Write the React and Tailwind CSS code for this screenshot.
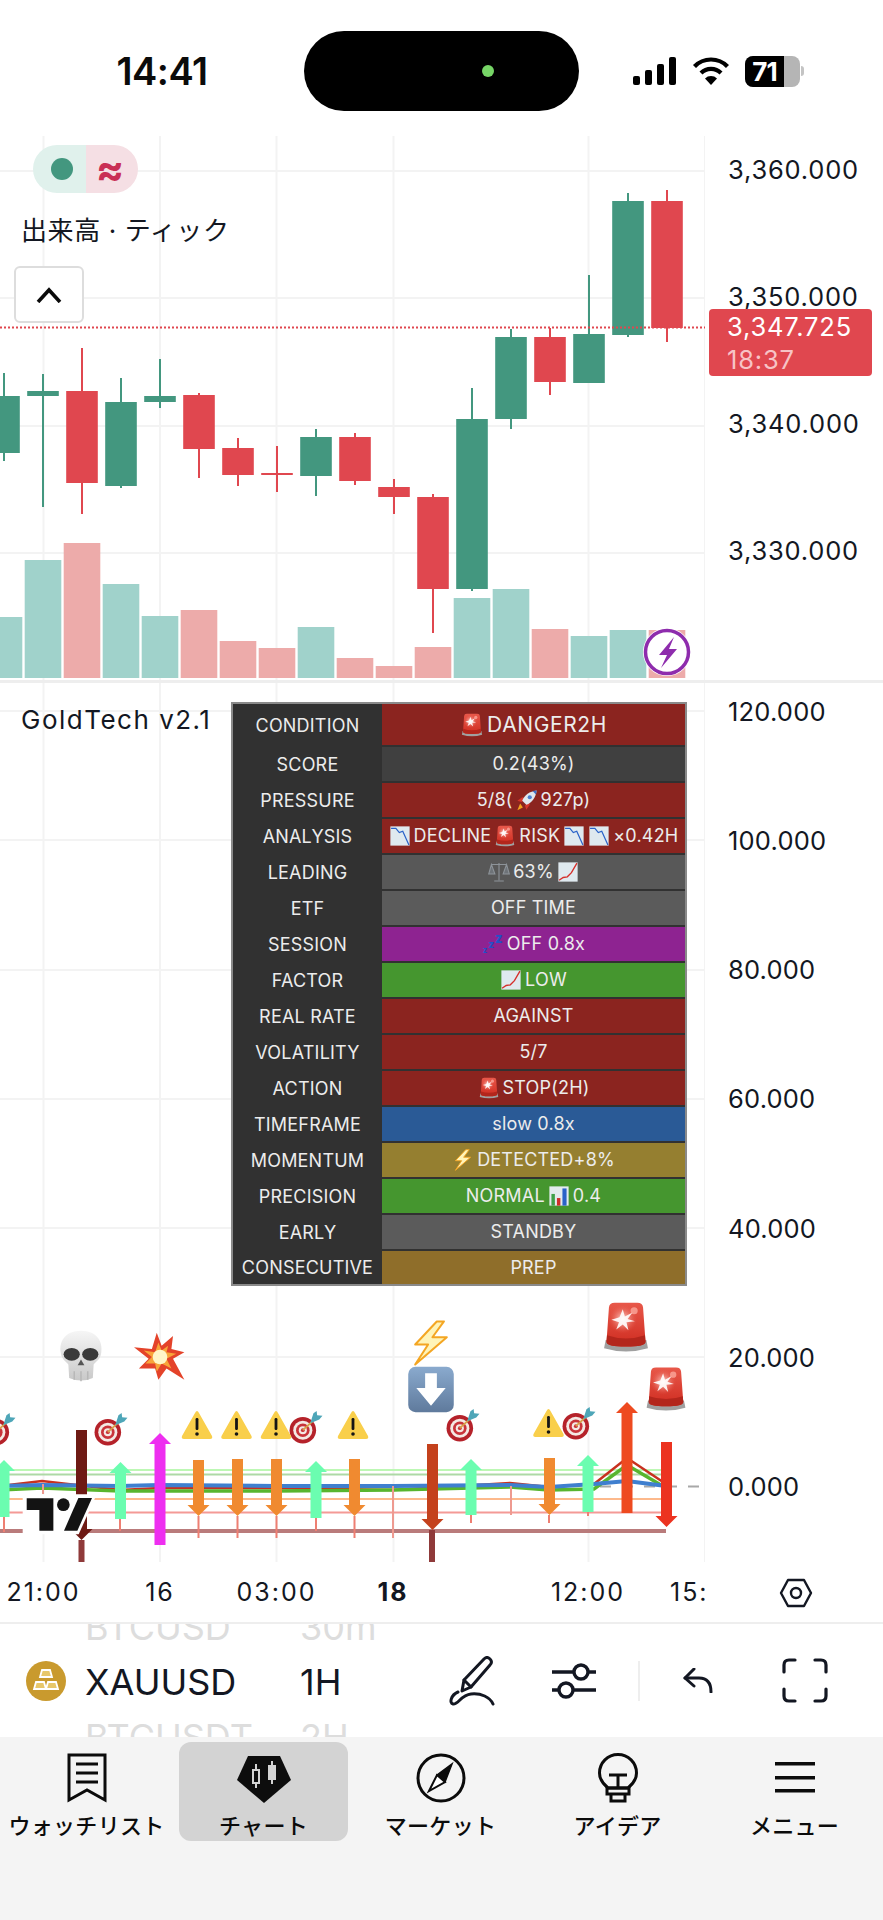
import React from "react";

const GREEN = "#43977f";
const RED = "#e0474f";

// x = 4 + 39 * i for every candle
const candles = [
  ["g", 373, 461, 396, 453],
  ["g", 374, 507, 391, 396],
  ["r", 348, 514, 391, 483],
  ["g", 378, 488, 402, 486],
  ["g", 359, 408, 396, 402],
  ["r", 393, 478, 395, 449],
  ["r", 438, 486, 448, 475],
  ["r", 446, 492, 473, 475],
  ["g", 429, 496, 437, 476],
  ["r", 433, 485, 437, 481],
  ["r", 479, 514, 487, 497],
  ["r", 494, 633, 497, 589],
  ["g", 388, 591, 419, 589],
  ["g", 329, 429, 337, 419],
  ["r", 328, 395, 337, 382],
  ["g", 275, 383, 334, 383],
  ["g", 193, 337, 201, 335],
  ["r", 190, 342, 201, 328],
];

const volumes = [617, 560, 543, 584, 616, 610, 641, 648, 627, 658, 666, 647, 598, 589, 629, 636, 630, 630];

const gridX = [43.5, 160, 276.5, 393.5, 588.5, 705];

function Emoji({ name, x, y, size = 32, className }) {
  return (
    <svg x={x} y={y} width={size} height={size} viewBox="0 0 32 32" className={className}>
      {name === "siren" && (
        <g>
          <path d="M3.500 24 H28.500 L29.500 29 Q16 33 2.500 29 Z" fill="#a0a0a0" />
          <path d="M5.500 4 Q5.700 1 9 1 H23 Q26.300 1 26.500 4 L28 25 Q28 28 16 28 Q4 28 4 25 Z" fill="url(#sirenRed)" />
          <path d="M4.300 21 Q16 25 27.700 21 L28 25 Q28 28 16 28 Q4 28 4 25 Z" fill="#b3261c" />
          <circle cx="14" cy="11" r="9" fill="url(#sirenGlow)" />
          <path d="M14 5 L15.300 9.500 L20 7 L17 11 L21.500 12.500 L16.300 13 L17.500 18 L14 14.500 L10 17.500 L11.700 13 L7 11.500 L12 10 Z" fill="#ffffff" opacity="0.9" />
          <circle cx="21" cy="6" r="2.200" fill="#ffb4a8" opacity="0.7" />
        </g>
      )}
      {name === "target" && (
        <g>
          <circle cx="13" cy="19" r="12.500" fill="#b5222a" />
          <circle cx="13" cy="19" r="9" fill="#f4e9e4" />
          <circle cx="13" cy="19" r="6.400" fill="#c9333a" />
          <circle cx="13" cy="19" r="3.800" fill="#f4e9e4" />
          <circle cx="13" cy="19" r="1.800" fill="#c9333a" />
          <path d="M13 19 L25 8" stroke="#d8a24a" strokeWidth="1.600" />
          <path d="M20 12.500 L23 3 L26 1 L26.500 5 L31.500 5.500 L28.500 9 Z" fill="#4ea6b8" />
        </g>
      )}
      {name === "warning" && (
        <g>
          <path d="M16 2 Q17 2 18 4 L31 27 Q32 30 29 30 H3 Q0 30 1 27 L14 4 Q15 2 16 2 Z" fill="#f9cf4b" />
          <rect x="14.600" y="9" width="2.800" height="12" rx="1.200" fill="#151515" />
          <circle cx="16" cy="25" r="1.800" fill="#151515" />
        </g>
      )}
      {name === "skull" && (
        <g>
          <path d="M16 1 C26 1 29 8 28 14 C27.500 18 25 19 23.500 21 L23 29 Q16 32 9 29 L8.500 21 C7 19 4.500 18 4 14 C3 8 6 1 16 1 Z" fill="url(#skullFill)" />
          <ellipse cx="10.500" cy="15" rx="4.800" ry="3.800" fill="#3a3a3a" />
          <ellipse cx="21.500" cy="15" rx="4.800" ry="3.800" fill="#3a3a3a" />
          <path d="M16 18 L18 21.500 H14 Z" fill="#555" />
          <path d="M12 25 V30 M16 25 V31 M20 25 V30" stroke="#b8b8b8" strokeWidth="0.900" />
        </g>
      )}
      {name === "collision" && (
        <g>
          <path d="M14 1 L17 9 L24 3 L23 11 L31 13 L24 17 L31 30 L20 23 L15 30 L13 23 L3 23 L9 17 L0 10 L11 11 Z" fill="#e4432a" />
          <path d="M15 7 L17 12 L21 9 L20 13 L26 14 L20 17 L23 23 L17 20 L14 25 L13 20 L7 20 L11 16 L6 12 L13 13 Z" fill="#f8a53a" />
          <circle cx="16" cy="16" r="4.500" fill="#fff6c8" />
        </g>
      )}
      {name === "bolt" && (
        <g>
          <path d="M20 1 L5 17 H14 L5 31 L27 12 H17 L25 1 Z" fill="#fff4b8" stroke="#f4a623" strokeWidth="1.400" strokeLinejoin="round" />
        </g>
      )}
      {name === "down" && (
        <g>
          <rect x="0.500" y="0.500" width="31" height="31" rx="5" fill="url(#downFill)" />
          <path d="M12 5 H20 V15 H26 L16 27 L6 15 H12 Z" fill="#ffffff" />
        </g>
      )}
      {name === "rocket" && (
        <g>
          <path d="M6 21 L2 31 L10 27 Z" fill="#f2a01e" />
          <path d="M8 19 L2 17 L9 12 L14 13 Z" fill="#d6362c" />
          <path d="M13 24 L15 30 L20 23 L19 18 Z" fill="#d6362c" />
          <path d="M9 17 C12 9 20 3 30 2 C29 12 23 20 15 23 Z" fill="#dfe6ee" />
          <path d="M24 2.800 C26 2.300 28 2 30 2 C29.800 4 29.500 6 29 8 Z" fill="#3e6fc4" />
          <circle cx="20" cy="12" r="3" fill="#4a7fd0" />
        </g>
      )}
      {name === "chartDown" && (
        <g>
          <rect x="2" y="2" width="28" height="28" fill="#dfe9ef" />
          <path d="M3 5 L10 5 L15 11 L20 9 L29 29" fill="none" stroke="#2a62c8" strokeWidth="1.800" />
        </g>
      )}
      {name === "chartUp" && (
        <g>
          <rect x="2" y="2" width="28" height="28" fill="#dfe9ef" />
          <path d="M3 28 L9 24 L15 23 L21 17 L29 3" fill="none" stroke="#d5302c" strokeWidth="2" />
        </g>
      )}
      {name === "scale" && (
        <g fill="none" stroke="#8d9399" strokeWidth="1.600">
          <path d="M16 3 V28 M9 29 H23 M5 5 H27" />
          <path d="M5 5 L1 19 H10 Z M27 5 L22 19 H31 Z" fill="#6e7378" />
        </g>
      )}
      {name === "zzz" && (
        <g fill="#2350c8" fontFamily="Inter" fontWeight="800">
          <text x="1" y="29" fontSize="11">z</text>
          <text x="9" y="22" fontSize="15">z</text>
          <text x="19" y="15" fontSize="19">z</text>
        </g>
      )}
      {name === "bars" && (
        <g>
          <rect x="2" y="2" width="28" height="28" fill="#e3ebee" />
          <rect x="5" y="13" width="5" height="17" fill="#3fa04a" />
          <rect x="13" y="19" width="5" height="11" fill="#cf2f2a" />
          <rect x="21" y="5" width="6" height="25" fill="#2a62c8" />
        </g>
      )}
    </svg>
  );
}

// up or down arrow of the indicator pane
function Arrow({ x, top, bottom, up, color }) {
  const points = up
    ? `${x - 11},${top + 11} ${x},${top} ${x + 11},${top + 11}`
    : `${x - 11},${bottom - 11} ${x},${bottom} ${x + 11},${bottom - 11}`;
  return (
    <g fill={color}>
      <rect x={x - 5.5} y={up ? top + 10 : top} width="11" height={bottom - top - 10} />
      <polygon points={points} />
    </g>
  );
}

function PriceChart() {
  return (
    <svg viewBox="0 136 705 544" width="705" height="544" className="block">
      {gridX.map((x) => (
        <rect key={x} x={x - 1} y="136" width="2" height="544" fill="#f3f3f3" />
      ))}
      {[171, 298, 426, 553].map((y) => (
        <rect key={y} x="0" y={y - 1} width="705" height="2" fill="#f3f3f3" />
      ))}
      {volumes.map((top, i) => (
        <rect
          key={i}
          x={4 + 39 * i - 18.3}
          y={top}
          width="36.600"
          height={678 - top}
          fill={candles[i][0] === "g" ? "#a0d2cb" : "#edabaa"}
        />
      ))}
      {candles.map(([kind, high, low, open, close], i) => {
        const x = 4 + 39 * i;
        const color = kind === "g" ? GREEN : RED;
        return (
          <g key={i} fill={color}>
            <rect x={x - 1} y={high} width="2" height={low - high} />
            <rect x={x - 15.8} y={open} width="31.600" height={close - open} />
          </g>
        );
      })}
      <line x1="0" y1="327.500" x2="705" y2="327.500" stroke={RED} strokeWidth="2" strokeDasharray="2 2" />
      <circle cx="667" cy="652" r="24" fill="#ffffff" />
      <circle cx="667" cy="652" r="21.500" fill="#ffffff" stroke="#8e2cad" strokeWidth="3.500" />
      <path d="M674 637 L659 655 H667 L661 668 L677 649 H669 Z" fill="#8e2cad" />
    </svg>
  );
}

function IndicatorChart() {
  return (
    <svg viewBox="0 683 705 879" width="705" height="879" className="block">
      {gridX.map((x) => (
        <rect key={x} x={x - 1} y="683" width="2" height="879" fill="#f3f3f3" />
      ))}
      {[711, 840, 970, 1099, 1228, 1357].map((y) => (
        <rect key={y} x="0" y={y - 1} width="705" height="2" fill="#f3f3f3" />
      ))}

      <line x1="600" y1="1486.500" x2="705" y2="1486.500" stroke="#a8a8a8" strokeWidth="2" strokeDasharray="11 11" />
      <rect x="0" y="1469" width="666" height="2" fill="#bdf8b4" />
      <rect x="0" y="1473.500" width="666" height="2" fill="#add9a6" />
      <rect x="0" y="1498" width="666" height="2" fill="#fdb98c" />
      <rect x="0" y="1511.500" width="666" height="2" fill="#f49a96" />
      <rect x="0" y="1529" width="666" height="4" fill="#b97b7b" />

      <polyline points="0,1486 42,1481 120,1490 160,1488 276,1488 393,1490 510,1483 549,1487 594,1484 627,1458 666,1484" fill="none" stroke="#c8301f" strokeWidth="2.500" />
      <polyline points="0,1490 42,1488 120,1491 160,1491 276,1491 393,1490 510,1487 549,1490 594,1489 627,1465 666,1488" fill="none" stroke="#58b52e" strokeWidth="3.500" />
      <polyline points="0,1486 42,1485 120,1486 160,1485 276,1486 393,1486 510,1485 549,1487 594,1484 627,1481 666,1486" fill="none" stroke="#3f7fcf" strokeWidth="4" />

      {[[4, 1516, 1532], [120, 1518, 1531], [198.500, 1516, 1538], [237.500, 1516, 1538], [276.500, 1516, 1538], [316, 1517, 1531], [354.500, 1516, 1538], [471, 1515, 1523], [549, 1515, 1523], [588, 1512, 1516]].map(([x, a, b]) => (
        <rect key={x} x={x - 1} y={a} width="2" height={b - a} fill="#ee7f72" />
      ))}
      <rect x="392" y="1486" width="2" height="52" fill="#ee9a90" />
      <rect x="510" y="1486" width="2" height="29" fill="#ee9a90" />
      <rect x="42" y="1484" width="2" height="10" fill="#ee9a90" />

      <Arrow x={4} top={1460} bottom={1517} up color="#6bfdb0" />
      <Arrow x={120.500} top={1462} bottom={1519} up color="#6bfdb0" />
      <Arrow x={316} top={1461} bottom={1518} up color="#6bfdb0" />
      <Arrow x={471} top={1459} bottom={1515} up color="#6bfdb0" />
      <Arrow x={588} top={1455} bottom={1512} up color="#6bfdb0" />
      <Arrow x={160} top={1433} bottom={1545} up color="#ee2ff0" />
      <Arrow x={198.500} top={1460} bottom={1516} color="#f08a30" />
      <Arrow x={237.500} top={1459} bottom={1516} color="#f08a30" />
      <Arrow x={276.500} top={1459} bottom={1516} color="#f08a30" />
      <Arrow x={354.500} top={1459} bottom={1516} color="#f08a30" />
      <Arrow x={549.500} top={1458} bottom={1515} color="#f08a30" />
      <Arrow x={627} top={1402} bottom={1513} up color="#ee4a20" />
      <Arrow x={666.500} top={1442} bottom={1527} color="#ec3320" />

      <rect x="78.500" y="1540" width="6" height="22" fill="#8f3a3a" />
      <Arrow x={81.500} top={1430} bottom={1540} color="#6e1a14" />
      <rect x="429" y="1530" width="6" height="32" fill="#8f3a3a" />
      <Arrow x={432.500} top={1444} bottom={1530} color="#c4411c" />

      <Emoji name="target" x={-18} y={1412} size={34} />
      <Emoji name="target" x={94} y={1412} size={34} />
      <Emoji name="target" x={289} y={1410} size={34} />
      <Emoji name="target" x={446} y={1408} size={34} />
      <Emoji name="target" x={562} y={1406} size={34} />
      {[181, 220.500, 260, 337, 532.500].map((x, i) => (
        <Emoji key={i} name="warning" x={x} y={i === 4 ? 1407 : 1409} />
      ))}
      <Emoji name="skull" x={54} y={1329} size={54} />
      <Emoji name="collision" x={134} y={1331} size={52} />
      <Emoji name="bolt" x={408} y={1320} size={46} />
      <Emoji name="down" x={407.500} y={1366} size={47} />
      <Emoji name="siren" x={600} y={1301} size={52} />
      <Emoji name="siren" x={643} y={1366} size={46} />

      {/* TradingView mark */}
      <g transform="translate(26.700 1498) scale(0.3333) translate(-80 -597)">
        <path d="M68 586 H290 L236 706 H68 Z" fill="#ffffff" />
        <path d="M80 598 H160 V695 H118 V633 H80 Z" fill="#131313" />
        <circle cx="190" cy="617" r="19" fill="#131313" />
        <path d="M235 597 H276 L232 695 H192 Z" fill="#131313" />
      </g>
    </svg>
  );
}

const rows = [
  { label: "CONDITION", bg: "bg-[#8b241f]", parts: ["siren", "DANGER2H"], height: "h-[43px]", big: true },
  { label: "SCORE", bg: "bg-[#404040]", parts: ["0.2(43%)"] },
  { label: "PRESSURE", bg: "bg-[#8b241f]", parts: ["5/8(", "rocket", "927p)"] },
  { label: "ANALYSIS", bg: "bg-[#8b241f]", parts: ["chartDown", "DECLINE", "siren", "RISK", "chartDown", "chartDown", "×0.42H"] },
  { label: "LEADING", bg: "bg-[#585858]", parts: ["scale", "63%", "chartUp"] },
  { label: "ETF", bg: "bg-[#5b5b5b]", parts: ["OFF TIME"] },
  { label: "SESSION", bg: "bg-[#8e2391]", parts: ["zzz", "OFF 0.8x"] },
  { label: "FACTOR", bg: "bg-[#45962f]", parts: ["chartUp", "LOW"] },
  { label: "REAL RATE", bg: "bg-[#8b241f]", parts: ["AGAINST"] },
  { label: "VOLATILITY", bg: "bg-[#8b241f]", parts: ["5/7"] },
  { label: "ACTION", bg: "bg-[#8b241f]", parts: ["siren", "STOP(2H)"] },
  { label: "TIMEFRAME", bg: "bg-[#2a5a96]", parts: ["slow 0.8x"] },
  { label: "MOMENTUM", bg: "bg-[#957f30]", parts: ["bolt", "DETECTED+8%"] },
  { label: "PRECISION", bg: "bg-[#45962f]", parts: ["NORMAL", "bars", "0.4"] },
  { label: "EARLY", bg: "bg-[#5b5b5b]", parts: ["STANDBY"] },
  { label: "CONSECUTIVE", bg: "bg-[#8f6e2a]", parts: ["PREP"], height: "h-[33px]", last: true },
];

const emojiNames = ["siren", "rocket", "chartDown", "chartUp", "scale", "zzz", "bolt", "bars"];

function StatusTable() {
  return (
    <div className="absolute left-[231px] top-[19px] w-[456px] border-2 border-[#8a8a8a] bg-[#313131] text-[18px] leading-none tracking-[0.2px] text-[#ececec]">
      {rows.map((row) => (
        <div key={row.label} className={`flex ${row.height || "h-[36px]"}`}>
          <div className="flex w-[149px] items-center justify-center">{row.label}</div>
          <div className={`flex flex-1 items-center justify-center gap-[3px] border-[#313131] ${row.last ? "" : "border-b-2"} ${row.bg} ${row.big ? "text-[21px] tracking-[0.6px]" : ""}`}>
            {row.parts.map((part, i) =>
              emojiNames.includes(part) ? (
                <Emoji key={i} name={part} size={row.big ? 24 : 22} className="shrink-0" />
              ) : (
                <span key={i}>{part}</span>
              )
            )}
          </div>
        </div>
      ))}
    </div>
  );
}

function StatusBar() {
  return (
    <div className="flex h-[136px] shrink-0 pt-[31px]">
      <div className="flex h-[80px] w-[304px] items-center justify-center pl-[20px] text-[38px] font-semibold tracking-[-0.5px] text-[#0b0b0b]">
        14:41
      </div>
      <div className="relative h-[80px] w-[275px] rounded-[40px] bg-black">
        <div className="absolute left-[178px] top-[34px] h-[12px] w-[12px] rounded-full bg-[#76d566]" />
      </div>
      <div className="flex h-[80px] items-center pl-[54px]">
        <svg width="44" height="28" viewBox="0 0 44 28" fill="#000">
          <rect x="0" y="19" width="7" height="9" rx="2" />
          <rect x="12" y="13" width="7" height="15" rx="2" />
          <rect x="24" y="7" width="7" height="21" rx="2" />
          <rect x="36" y="0" width="7" height="28" rx="2" />
        </svg>
        <svg width="38" height="28" viewBox="0 0 38 28" className="ml-[15px]" fill="none" stroke="#000" strokeWidth="4.200">
          <path d="M2.500 9.500 A23 23 0 0 1 35.500 9.500" />
          <path d="M9 16 A14 14 0 0 1 29 16" />
          <path d="M19 28 L13 21.500 A8.500 8.500 0 0 1 25 21.500 Z" fill="#000" stroke="none" />
        </svg>
        <div className="ml-[15px] flex items-center">
          <div className="flex h-[31px] w-[55px] overflow-hidden rounded-[8px] bg-[#b5b5b5]">
            <div className="flex h-full w-[39px] items-center justify-center bg-black text-[26px] font-bold tracking-[-1px] text-white">
              71
            </div>
          </div>
          <div className="ml-[1px] h-[10px] w-[3px] rounded-r-full bg-[#c4c4c4]" />
        </div>
      </div>
    </div>
  );
}

function PriceAxis({ labels, className }) {
  return (
    <div className={`flex w-[178px] shrink-0 flex-col pl-[23px] ${className}`}>
      {labels.map((label) => (
        <div key={label} className="flex h-[34px] items-center text-[25.500px] text-[#131722]">
          {label}
        </div>
      ))}
    </div>
  );
}

const timeSlots = [
  { label: "21:00", cls: "w-[87px] text-center" },
  { label: "16", cls: "w-[146px] text-center" },
  { label: "03:00", cls: "w-[87px] text-center" },
  { label: "18", cls: "w-[146px] text-center font-bold" },
  { label: "12:00", cls: "ml-[64px] w-[116px] text-center" },
  { label: "15:", cls: "ml-[24px] w-[35px] overflow-hidden" },
];

function TimeAxis() {
  return (
    <div className="flex h-[62px] shrink-0 items-center border-b-2 border-[#eeeeee] pt-[2px]">
      <div className="flex w-[705px] overflow-hidden text-[25px] tracking-[2px] text-[#131722]">
        {timeSlots.map((slot) => (
          <div key={slot.label} className={slot.cls}>{slot.label}</div>
        ))}
      </div>
      <div className="flex flex-1 justify-center pl-[3px]">
        <svg width="34" height="30" viewBox="0 0 34 30" fill="none" stroke="#131722" strokeWidth="2.400">
          <path d="M9 2 H25 L32 15 L25 28 H9 L2 15 Z" strokeLinejoin="round" />
          <circle cx="17" cy="15" r="5" />
        </svg>
      </div>
    </div>
  );
}

function WheelRow({ symbol, period, ghost }) {
  return (
    <div className={`flex h-[55px] shrink-0 items-center text-[36px] ${ghost ? "text-[#dddddd]" : "text-[#131722]"}`}>
      <div className="w-[215px]">{symbol}</div>
      <div>{period}</div>
    </div>
  );
}

function Toolbar() {
  return (
    <div className="flex h-[113px] shrink-0 items-center overflow-hidden">
      <svg width="40" height="40" viewBox="0 0 40 40" className="ml-[26px] shrink-0">
        <circle cx="20" cy="20" r="20" fill="#c99a2e" />
        <g fill="none" stroke="#ffffff" strokeWidth="1.800">
          <path d="M16 9 H24 L26 16 H14 Z" fill="#e7c76a" />
          <path d="M10 21 H18 L20 28 H8 Z" fill="#e7c76a" />
          <path d="M22 21 H30 L32 28 H20 Z" fill="#e7c76a" />
        </g>
      </svg>
      <div className="ml-[19px] mt-[2px] flex h-[165px] w-[340px] shrink-0 flex-col">
        <WheelRow symbol="BTCUSD" period="30m" ghost />
        <WheelRow symbol="XAUUSD" period="1H" />
        <WheelRow symbol="BTCUSDT" period="2H" ghost />
      </div>
      <svg width="46" height="50" viewBox="0 0 46 50" className="ml-[24px] shrink-0" fill="none" stroke="#131722" strokeWidth="3" strokeLinejoin="round" strokeLinecap="round">
        <path d="M13 35 L15 24 L35 3 Q38 0 41 3 Q44 6 41 9 L22 31 Z" />
        <path d="M15 24 L22 31" />
        <path d="M9 36 C2 39 0 47 4 48 C9 49 12 39 22 38 C32 37 41 41 44 48" />
      </svg>
      <svg width="46" height="38" viewBox="0 0 46 38" className="ml-[56px] shrink-0" fill="none" stroke="#131722" strokeWidth="3.400">
        <path d="M1 10 H45 M1 28 H45" />
        <circle cx="30" cy="10" r="7" fill="#ffffff" />
        <circle cx="15" cy="28" r="7" fill="#ffffff" />
      </svg>
      <div className="ml-[41px] h-[40px] w-[2px] shrink-0 bg-[#eeeeee]" />
      <svg width="30" height="25" viewBox="0 0 30 25" className="ml-[43px] shrink-0" fill="none" stroke="#131722" strokeWidth="3" strokeLinejoin="round" strokeLinecap="round">
        <path d="M11 1 L2 10 L11 18" />
        <path d="M2 10 H16 Q28 10 28 24" />
      </svg>
      <svg width="46" height="45" viewBox="0 0 46 45" className="ml-[69px] shrink-0" fill="none" stroke="#131722" strokeWidth="3.200" strokeLinecap="round">
        <path d="M2 14 V7 Q2 2 7 2 H13" />
        <path d="M33 2 H39 Q44 2 44 7 V14" />
        <path d="M44 31 V38 Q44 43 39 43 H33" />
        <path d="M13 43 H7 Q2 43 2 38 V31" />
      </svg>
    </div>
  );
}

function NavIcon({ name }) {
  if (name === "watchlist") {
    return (
      <svg width="40" height="50" viewBox="0 0 40 50" fill="none" stroke="#0b0b0b" strokeWidth="3">
        <path d="M2 2 H38 V47 L20 37 L2 47 Z" />
        <path d="M9 11 H31 M9 20 H31 M9 29 H31" />
      </svg>
    );
  }
  if (name === "chart") {
    return (
      <svg width="54" height="50" viewBox="0 0 54 50">
        <path d="M11 3 H43 L54 27 L27 50 L0 27 Z" fill="#0d0d0d" />
        <g fill="none" stroke="#d3d3d3" strokeWidth="2">
          <path d="M19 11 V35 M35 8 V31" />
          <rect x="16" y="17" width="6" height="13" fill="#0d0d0d" />
          <rect x="32" y="13" width="6" height="13" fill="#d3d3d3" />
        </g>
      </svg>
    );
  }
  if (name === "market") {
    return (
      <svg width="50" height="50" viewBox="0 0 50 50" fill="none" stroke="#0b0b0b" strokeWidth="3">
        <circle cx="25" cy="25" r="23" />
        <path d="M36 11 L29 29 L21 22 Z" fill="#0b0b0b" strokeWidth="1.500" />
        <path d="M13 38 L21 22 L29 29 Z" fill="#ffffff" strokeWidth="2" />
      </svg>
    );
  }
  if (name === "idea") {
    return (
      <svg width="40" height="50" viewBox="0 0 40 50" fill="none" stroke="#0b0b0b" strokeWidth="3">
        <path d="M10 35 C4 30 1.500 25 1.500 20 A18.500 18.500 0 0 1 38.500 20 C38.500 25 36 30 30 35 Z" />
        <path d="M11 22 H29 M20 22 V35" />
        <path d="M9 35 H31 V41 H9 Z M13 41 H27 V48 H13 Z" />
      </svg>
    );
  }
  return (
    <svg width="42" height="50" viewBox="0 0 42 50" fill="#0b0b0b">
      <rect x="1" y="9" width="40" height="3.500" />
      <rect x="1" y="23" width="40" height="3.500" />
      <rect x="1" y="36" width="40" height="3.500" />
    </svg>
  );
}

const tabs = [
  { name: "watchlist", label: "ウォッチリスト" },
  { name: "chart", label: "チャート", active: true },
  { name: "market", label: "マーケット" },
  { name: "idea", label: "アイデア" },
  { name: "menu", label: "メニュー" },
];

function BottomNav() {
  return (
    <div className="min-h-0 flex-1 bg-[#f4f4f4] pt-[5px]">
      <div className="-ml-[2px] grid grid-cols-[repeat(5,177px)]">
        {tabs.map((tab) => (
          <div key={tab.name} className="flex justify-center">
            <div className={`flex h-[99px] w-[169px] flex-col items-center rounded-[12px] pt-[11px] ${tab.active ? "bg-[#d3d3d3]" : ""}`}>
              <NavIcon name={tab.name} />
              <div className="mt-[9px] whitespace-nowrap text-[22px] font-medium leading-[28px] tracking-[0.3px] text-[#0b0b0b]">{tab.label}</div>
            </div>
          </div>
        ))}
      </div>
    </div>
  );
}

export default function App() {
  return (
    <div className="flex h-[1920px] w-[883px] flex-col overflow-hidden bg-white font-['Inter','Noto_Sans_CJK_JP',sans-serif]">
      {/* shared gradients for the drawn emoji */}
      <svg width="0" height="0" className="absolute">
        <defs>
          <linearGradient id="sirenRed" x1="0" y1="0" x2="0" y2="1">
            <stop offset="0" stopColor="#e8584a" />
            <stop offset="1" stopColor="#cf2c20" />
          </linearGradient>
          <radialGradient id="sirenGlow">
            <stop offset="0" stopColor="#ffe3dd" />
            <stop offset="1" stopColor="#e8584a" stopOpacity="0" />
          </radialGradient>
          <linearGradient id="skullFill" x1="0" y1="0" x2="0" y2="1">
            <stop offset="0" stopColor="#f6f6f6" />
            <stop offset="1" stopColor="#c9c9c9" />
          </linearGradient>
          <linearGradient id="downFill" x1="0" y1="0" x2="0" y2="1">
            <stop offset="0" stopColor="#8aaace" />
            <stop offset="1" stopColor="#5f7a9c" />
          </linearGradient>
        </defs>
      </svg>

      <StatusBar />

      <div className="relative flex h-[544px] shrink-0">
        <PriceChart />
        <PriceAxis labels={["3,360.000", "3,350.000", "3,340.000", "3,330.000"]} className="gap-[93px] pt-[17px] tracking-[0.8px]" />
        <div className="absolute left-[14px] top-[9px] flex flex-col items-start">
          <div className="ml-[19px] flex h-[48px] w-[105px] overflow-hidden rounded-full">
            <div className="flex w-[53px] items-center justify-center bg-[#e0f1ec] pl-[5px]">
              <div className="h-[22px] w-[22px] rounded-full bg-[#43977f]" />
            </div>
            <div className="flex flex-1 items-center justify-center bg-[#f5dfe4] pr-[4px] text-[42px] font-bold leading-[48px] text-[#c92f55]">
              ≈
            </div>
          </div>
          <div className="ml-[7px] mt-[20px] text-[26px] leading-[36px] tracking-[0.6px] text-[#131722]">出来高 · ティック</div>
          <div className="mt-[17px] flex h-[57px] w-[70px] items-center justify-center rounded-[6px] border-2 border-[#dddddd] bg-white">
            <svg width="26" height="16" viewBox="0 0 26 16" fill="none" stroke="#0b0b0b" strokeWidth="3.600">
              <path d="M2 15 L13 3 L24 15" />
            </svg>
          </div>
        </div>
        <div className="absolute left-[709px] top-[173px] flex h-[67px] w-[163px] flex-col justify-center rounded-[4px] bg-[#e0474f] pl-[18px] text-[25.500px] leading-[33px] tracking-[0.8px]">
          <div className="text-white">3,347.725</div>
          <div className="text-[#f7c3c6]">18:37</div>
        </div>
      </div>

      <div className="h-[3px] shrink-0 bg-[#eeeeee]" />

      <div className="relative flex h-[879px] shrink-0">
        <IndicatorChart />
        <PriceAxis
          labels={["120.000", "100.000", "80.000", "60.000", "40.000", "20.000", "0.000"]}
          className="gap-[95.200px] pt-[12px] tracking-[0.2px]"
        />
        <div className="absolute left-[21px] top-[19px] text-[26px] leading-[36px] tracking-[1.5px] text-[#131722]">GoldTech v2.1</div>
        <StatusTable />
      </div>

      <TimeAxis />
      <Toolbar />
      <BottomNav />
    </div>
  );
}
